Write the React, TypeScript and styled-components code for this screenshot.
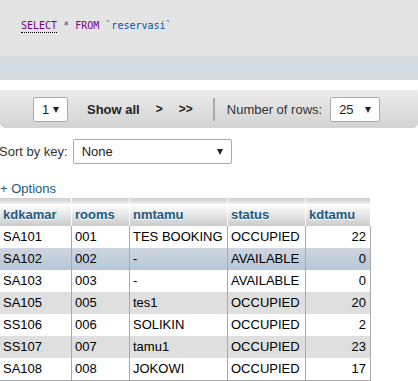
import styled, { createGlobalStyle } from 'styled-components'

const GlobalStyle = createGlobalStyle`
  html, body {
    margin: 0;
    padding: 0;
    background: #ffffff;
  }
  body {
    width: 418px;
    height: 381px;
    overflow: hidden;
    font-family: "Liberation Sans", Arial, sans-serif;
    font-size: 13px;
    color: #000000;
  }
`

const rows: {
  kdkamar: string
  rooms: string
  nmtamu: string
  status: string
  kdtamu: number
}[] = [
    { kdkamar: 'SA101', rooms: '001', nmtamu: 'TES BOOKING', status: 'OCCUPIED', kdtamu: 22 },
    { kdkamar: 'SA102', rooms: '002', nmtamu: '-', status: 'AVAILABLE', kdtamu: 0 },
    { kdkamar: 'SA103', rooms: '003', nmtamu: '-', status: 'AVAILABLE', kdtamu: 0 },
    { kdkamar: 'SA105', rooms: '005', nmtamu: 'tes1', status: 'OCCUPIED', kdtamu: 20 },
    { kdkamar: 'SS106', rooms: '006', nmtamu: 'SOLIKIN', status: 'OCCUPIED', kdtamu: 2 },
    { kdkamar: 'SS107', rooms: '007', nmtamu: 'tamu1', status: 'OCCUPIED', kdtamu: 23 },
    { kdkamar: 'SA108', rooms: '008', nmtamu: 'JOKOWI', status: 'OCCUPIED', kdtamu: 17 }
  ]

const columns = ['kdkamar', 'rooms', 'nmtamu', 'status', 'kdtamu']

const App: React.FC = () => (
  <Page>
    <GlobalStyle />
    <SqlBox>
      <Keyword>SELECT</Keyword> <Star>*</Star> <Plain>FROM</Plain> <Ident>`reservasi`</Ident>
    </SqlBox>
    <ToolsBand />
    <NavBar>
      <Dropdown width={35}>1<Arrow /></Dropdown>
      <NavLink>Show all</NavLink>
      <NavArrow>&gt;</NavArrow>
      <NavArrow>&gt;&gt;</NavArrow>
      <Separator />
      <Label>Number of rows:</Label>
      <Dropdown width={50}>25<Arrow /></Dropdown>
    </NavBar>
    <SortRow>
      <Label>Sort by key:</Label>
      <Dropdown width={159}>None<Arrow /></Dropdown>
    </SortRow>
    <Options>+ Options</Options>
    <Table>
      <HeadRow>
        {columns.map(c => <HeadCell key={c}>{c}</HeadCell>)}
      </HeadRow>
      {rows.map((r, i) => (
        <Row key={r.kdkamar} tone={i === 1 ? 'hover' : i % 2 === 1 ? 'even' : 'odd'}>
          <Cell>{r.kdkamar}</Cell>
          <Cell>{r.rooms}</Cell>
          <Cell>{r.nmtamu}</Cell>
          <Cell>{r.status}</Cell>
          <Cell align="right">{r.kdtamu}</Cell>
        </Row>
      ))}
    </Table>
  </Page>
)

export default App

const Page = styled.div`
  width: 418px;
  display: flex;
  flex-direction: column;
`
const SqlBox = styled.div`
  height: 56px;
  box-sizing: border-box;
  padding: 19px 0 0 21px;
  background: #e4e4e4;
  font-family: "DejaVu Sans Mono", "Liberation Mono", monospace;
  font-size: 10px;
  line-height: 14px;
  color: #555555;
  white-space: pre;
`
const Keyword = styled.span`
  color: #770088;
  border-bottom: 1px dotted #000000;
  padding-bottom: 1px;
`
const Plain = styled.span`
  color: #770088;
`
const Star = styled.span`
  color: #555555;
`
const Ident = styled.span`
  color: #0055aa;
`
const ToolsBand = styled.div`
  height: 24px;
  background: #d4dce3;
`
const NavBar = styled.div`
  margin-top: 10px;
  height: 38px;
  box-sizing: border-box;
  display: flex;
  align-items: center;
  padding-left: 33px;
  background: linear-gradient(#ececec, #d3d3d3);
  border-radius: 0 0 5px 5px;
`
const Dropdown = styled.div<{ width: number }>`
  position: relative;
  width: ${p => p.width}px;
  height: 25px;
  box-sizing: border-box;
  display: flex;
  align-items: center;
  padding-left: 8px;
  background: #ffffff;
  border: 1px solid #aaaaaa;
  border-radius: 2px;
  color: #222222;
`
const Arrow = styled.span`
  position: absolute;
  right: 8px;
  top: 9px;
  width: 0;
  height: 0;
  border-left: 3px solid transparent;
  border-right: 3px solid transparent;
  border-top: 6px solid #222222;
`
const NavLink = styled.span`
  margin-left: 19px;
  font-weight: bold;
  color: #222222;
`
const NavArrow = styled.span`
  margin-left: 16px;
  font-weight: bold;
  font-size: 12px;
  color: #222222;
`
const Separator = styled.span`
  margin-left: 20px;
  width: 2px;
  height: 23px;
  background: #aaaaaa;
`
const Label = styled.span`
  margin: 0 8px 0 12px;
  color: #333333;
`
const SortRow = styled.div`
  margin: 11px 0 0 -13px;
  display: flex;
  align-items: center;
  & > ${Label} {
    margin-left: 12px;
    margin-right: 5px;
  }
`
const Options = styled.div`
  margin-top: 15px;
  height: 19px;
  line-height: 19px;
  color: #235a81;
`
const Table = styled.div`
  width: 371px;
  display: flex;
  flex-direction: column;
  border-bottom: 1px solid #aaaaaa;
`
const gridCols = '72px 58px 98px 78px 65px'
const HeadRow = styled.div`
  display: grid;
  grid-template-columns: ${gridCols};
  height: 28px;
  background: linear-gradient(#cfcfcf 0px, #e6e6e6 5px, #ffffff 6px, #cccccc 100%);
`
const HeadCell = styled.div`
  box-sizing: border-box;
  padding: 6px 0 0 3px;
  line-height: 22px;
  font-weight: bold;
  color: #235a81;
  text-shadow: 0 1px 0 #ffffff;
  border-right: 1px solid #ffffff;
`
const toneBg = {
  odd: '#ffffff',
  even: '#dfdfdf',
  hover: 'linear-gradient(#ced6df, #b6c6d7)'
}
const Row = styled.div<{ tone: 'odd' | 'even' | 'hover' }>`
  display: grid;
  grid-template-columns: ${gridCols};
  height: 22px;
  background: ${p => toneBg[p.tone]};
`
const Cell = styled.div<{ align?: 'left' | 'right' }>`
  box-sizing: border-box;
  padding: 0 4px 0 3px;
  line-height: 22px;
  text-align: ${p => p.align || 'left'};
  color: #000000;
  border-right: 1px solid #aaaaaa;
  white-space: nowrap;
  overflow: hidden;
`
